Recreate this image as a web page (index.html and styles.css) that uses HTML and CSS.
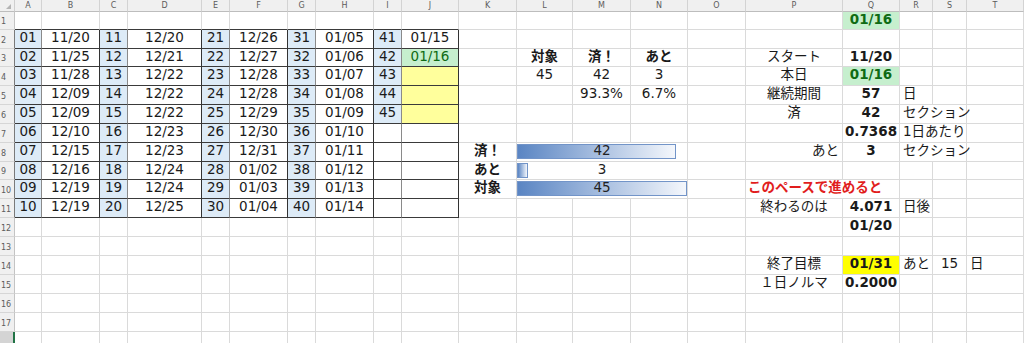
FILE: index.html
```html
<!DOCTYPE html>
<html lang="ja">
<head>
<meta charset="utf-8">
<title>進捗管理</title>
<link rel="stylesheet" href="styles.css">
</head>
<body>
<div class="sheet">
<div class="corner"><span class="tri"></span></div><div class="ch">A</div><div class="ch">B</div><div class="ch">C</div><div class="ch">D</div><div class="ch">E</div><div class="ch">F</div><div class="ch">G</div><div class="ch">H</div><div class="ch">I</div><div class="ch">J</div><div class="ch">K</div><div class="ch">L</div><div class="ch">M</div><div class="ch">N</div><div class="ch">O</div><div class="ch">P</div><div class="ch">Q</div><div class="ch">R</div><div class="ch">S</div><div class="ch">T</div>

<div class="rh">1</div><div class="tt"></div><div class="tt"></div><div class="tt"></div><div class="tt"></div><div class="tt"></div><div class="tt"></div><div class="tt"></div><div class="tt"></div><div class="tt"></div><div class="tt"></div><div></div><div></div><div></div><div></div><div></div><div></div><div class="b gq">01/16</div><div></div><div></div><div></div>

<div class="rh tl">2</div><div class="t p n">01</div><div class="t">11/20</div><div class="t p n">11</div><div class="t">12/20</div><div class="t p n">21</div><div class="t">12/26</div><div class="t p n">31</div><div class="t">01/05</div><div class="t p n">41</div><div class="t">01/15</div><div></div><div></div><div></div><div></div><div></div><div></div><div></div><div></div><div></div><div></div>

<div class="rh tl">3</div><div class="t p n">02</div><div class="t">11/25</div><div class="t p n">12</div><div class="t">12/21</div><div class="t p n">22</div><div class="t">12/27</div><div class="t p n">32</div><div class="t">01/06</div><div class="t p n">42</div><div class="t gq">01/16</div><div></div><div class="b">対象</div><div class="b">済！</div><div class="b">あと</div><div></div><div>スタート</div><div class="b">11/20</div><div></div><div></div><div></div>

<div class="rh tl">4</div><div class="t p n">03</div><div class="t">11/28</div><div class="t p n">13</div><div class="t">12/22</div><div class="t p n">23</div><div class="t">12/28</div><div class="t p n">33</div><div class="t">01/07</div><div class="t p n">43</div><div class="t y1"></div><div></div><div>45</div><div>42</div><div>3</div><div></div><div>本日</div><div class="b gq">01/16</div><div></div><div></div><div></div>

<div class="rh tl">5</div><div class="t p n">04</div><div class="t">12/09</div><div class="t p n">14</div><div class="t">12/22</div><div class="t p n">24</div><div class="t">12/28</div><div class="t p n">34</div><div class="t">01/08</div><div class="t p n">44</div><div class="t y1"></div><div></div><div></div><div>93.3%</div><div>6.7%</div><div></div><div>継続期間</div><div class="b">57</div><div class="l">日</div><div></div><div></div>

<div class="rh tl">6</div><div class="t p n">05</div><div class="t">12/09</div><div class="t p n">15</div><div class="t">12/22</div><div class="t p n">25</div><div class="t">12/29</div><div class="t p n">35</div><div class="t">01/09</div><div class="t p n">45</div><div class="t y1"></div><div></div><div></div><div></div><div></div><div></div><div>済</div><div class="b">42</div><div class="l s2">セクション</div><div></div>

<div class="rh tl">7</div><div class="t p n">06</div><div class="t">12/10</div><div class="t p n">16</div><div class="t">12/23</div><div class="t p n">26</div><div class="t">12/30</div><div class="t p n">36</div><div class="t">01/10</div><div class="t p"></div><div class="t"></div><div></div><div></div><div></div><div></div><div></div><div></div><div class="b">0.7368</div><div class="l s2">1日あたり</div><div></div>

<div class="rh tl">8</div><div class="t p n">07</div><div class="t">12/15</div><div class="t p n">17</div><div class="t">12/23</div><div class="t p n">27</div><div class="t">12/31</div><div class="t p n">37</div><div class="t">01/11</div><div class="t p"></div><div class="t"></div><div class="b">済！</div><div class="bc s3"><div class="bar" style="width:93.33%"></div><div class="bv">42</div></div><div></div><div class="r">あと</div><div class="b">3</div><div class="l s2">セクション</div><div></div>

<div class="rh tl">9</div><div class="t p n">08</div><div class="t">12/16</div><div class="t p n">18</div><div class="t">12/24</div><div class="t p n">28</div><div class="t">01/02</div><div class="t p n">38</div><div class="t">01/12</div><div class="t p"></div><div class="t"></div><div class="b">あと</div><div class="bc s3"><div class="bar" style="width:6.67%"></div><div class="bv">3</div></div><div></div><div></div><div></div><div></div><div></div><div></div>

<div class="rh tl">10</div><div class="t p n">09</div><div class="t">12/19</div><div class="t p n">19</div><div class="t">12/24</div><div class="t p n">29</div><div class="t">01/03</div><div class="t p n">39</div><div class="t">01/13</div><div class="t p"></div><div class="t"></div><div class="b">対象</div><div class="bc s3"><div class="bar" style="width:100%"></div><div class="bv">45</div></div><div></div><div class="red s2">このペースで進めると</div><div></div><div></div><div></div>

<div class="rh tl">11</div><div class="t p n">10</div><div class="t">12/19</div><div class="t p n">20</div><div class="t">12/25</div><div class="t p n">30</div><div class="t">01/04</div><div class="t p n">40</div><div class="t">01/14</div><div class="t p"></div><div class="t"></div><div></div><div></div><div></div><div></div><div></div><div>終わるのは</div><div class="b">4.071</div><div class="l">日後</div><div></div><div></div>

<div class="rh">12</div><div></div><div></div><div></div><div></div><div></div><div></div><div></div><div></div><div></div><div></div><div></div><div></div><div></div><div></div><div></div><div></div><div class="b">01/20</div><div></div><div></div><div></div>

<div class="rh">13</div><div></div><div></div><div></div><div></div><div></div><div></div><div></div><div></div><div></div><div></div><div></div><div></div><div></div><div></div><div></div><div></div><div></div><div></div><div></div><div></div>

<div class="rh">14</div><div></div><div></div><div></div><div></div><div></div><div></div><div></div><div></div><div></div><div></div><div></div><div></div><div></div><div></div><div></div><div>終了目標</div><div class="b y2">01/31</div><div class="l">あと</div><div>15</div><div class="l">日</div>

<div class="rh">15</div><div></div><div></div><div></div><div></div><div></div><div></div><div></div><div></div><div></div><div></div><div></div><div></div><div></div><div></div><div></div><div>１日ノルマ</div><div class="b">0.2000</div><div></div><div></div><div></div>

<div class="rh">16</div><div></div><div></div><div></div><div></div><div></div><div></div><div></div><div></div><div></div><div></div><div></div><div></div><div></div><div></div><div></div><div></div><div></div><div></div><div></div><div></div>

<div class="rh">17</div><div></div><div></div><div></div><div></div><div></div><div></div><div></div><div></div><div></div><div></div><div></div><div></div><div></div><div></div><div></div><div></div><div></div><div></div><div></div><div></div>

<div class="rh sel"></div><div></div><div></div><div></div><div></div><div></div><div></div><div></div><div></div><div></div><div></div><div></div><div></div><div></div><div></div><div></div><div></div><div></div><div></div><div></div><div></div>
</div>
</body>
</html>
```

FILE: styles.css
```css
html, body {
  margin: 0;
  padding: 0;
  background: #ffffff;
}
body {
  width: 1024px;
  height: 343px;
  overflow: hidden;
}
.sheet {
  display: grid;
  grid-template-columns: 15px 27px 58px 28px 74px 28px 58px 28px 58px 28px 57px 58px 56px 58px 57px 58px 97px 57px 33px 34px 57px;
  grid-template-rows: 12px 18px 19px 18px 19px 19px 19px 19px 19px 18px 19px 19px 19px 19px 19px 19px 19px 19px 19px;
  font-family: "DejaVu Sans", "Noto Sans CJK JP", sans-serif;
  font-size: 13.5px;
  color: #1a1a1a;
}
.sheet > div {
  box-sizing: border-box;
  border-right: 1px solid #dadada;
  border-bottom: 1px solid #dadada;
  display: flex;
  align-items: center;
  justify-content: center;
  white-space: nowrap;
  overflow: hidden;
  padding-bottom: 2px;
  line-height: 1;
}
.sheet > .corner {
  background: #f0f0f0;
  border-right-color: #cfcfcf;
  border-bottom-color: #bdbdbd;
  justify-content: flex-end;
  align-items: flex-end;
  padding: 0 3px 2px 0;
}
.tri {
  width: 0;
  height: 0;
  border-left: 5px solid transparent;
  border-bottom: 5px solid #b4b4b4;
}
.sheet > .ch {
  background: #f0f0f0;
  color: #5c5c5c;
  font-family: "DejaVu Sans", sans-serif;
  font-size: 8px;
  border-right-color: #d3d3d3;
  border-bottom-color: #bdbdbd;
  padding: 0;
}
.sheet > .rh {
  background: #f0f0f0;
  color: #5c5c5c;
  font-family: "DejaVu Sans", sans-serif;
  font-size: 8px;
  justify-content: flex-start;
  align-items: flex-end;
  padding: 0 0 3px 1px;
  border-right-color: #c4c4c4;
  border-bottom-color: #d6d6d6;
  overflow: visible;
}
.sheet > .rh.tl {
  border-right-color: #7a7a7a;
}
.sheet > .rh.sel {
  background: #d4d4d4;
  border-right: 2px solid #217346;
}
.sheet > .tt {
  border-bottom-color: #3a3a3a;
}
.sheet > .t {
  border-right-color: #333333;
  border-bottom-color: #3a3a3a;
}
.sheet > .t.p {
  border-right-color: #8a8a8a;
}
.n {
  background: #ddebf7;
}
.gq {
  background: #c6efce;
  color: #0f6b14;
}
.y1 {
  background: #ffff9c;
}
.y2 {
  background: #ffff00;
}
.b {
  font-weight: bold;
}
.sheet > .l {
  justify-content: flex-start;
  padding-left: 3px;
}
.sheet > .r {
  justify-content: flex-end;
  padding-right: 3px;
}
.s2 {
  grid-column: span 2;
}
.sheet > .s2 {
  overflow: visible;
}
.s3 {
  grid-column: span 3;
}
.sheet > .red {
  grid-column: span 2;
  color: #e11d1d;
  font-weight: bold;
  justify-content: flex-start;
  padding-left: 2px;
}
.sheet > .bc {
  display: grid;
  grid-template-columns: 100%;
  grid-template-rows: 100%;
  align-items: start;
  justify-items: start;
  padding: 0;
}
.bc > div {
  grid-area: 1 / 1;
}
.bar {
  box-sizing: border-box;
  height: 15px;
  margin-top: 1px;
  border: 1px solid #7294c8;
  background: linear-gradient(to right, #5a85c3, #f4f7fc);
}
.bv {
  justify-self: stretch;
  align-self: stretch;
  display: flex;
  align-items: center;
  justify-content: center;
  padding-bottom: 2px;
  color: #222222;
}
```
